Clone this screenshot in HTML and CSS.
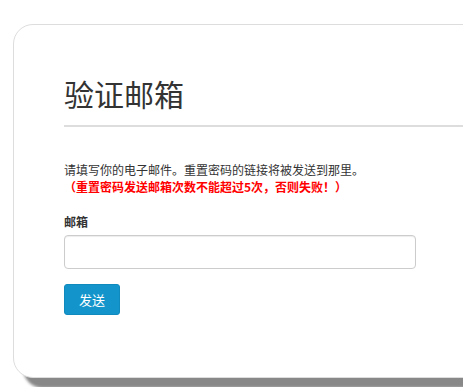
FILE: index.html
```html
<!doctype html>
<html lang="zh-CN">
<head>
    <meta charset="utf-8" />
    <meta name="viewport" content="width=device-width, initial-scale=1" />
    <title>验证邮箱</title>
    <link rel="stylesheet" href="styles.css">
</head>
<body>
    <div class="page">
        <!-- Card -->
        <div class="card">
            <h1 class="title">验证邮箱</h1>
            <hr class="rule">

            <p class="intro">
                请填写你的电子邮件。重置密码的链接将被发送到那里。<br>
                <span class="warn">（重置密码发送邮箱次数不能超过5次，否则失败！）</span>
            </p>

            <form class="form">
                <label class="label" for="email">邮箱</label>
                <input type="email" id="email" class="input">
                <button type="button" class="send-button">发送</button>
            </form>
        </div>
    </div>
</body>
</html>
```

FILE: styles.css
```css
html, body {
    height: 387px;
}
body {
    font-family: "Noto Sans CJK SC", "Liberation Sans", sans-serif;
    margin: 0;
    background: white;
    color: #333;
    overflow: hidden;
}
.page {
    padding: 24px 0 0 13px;
}
.card {
    width: 520px;
    height: 302px;
    padding: 50px 0 0 50px;
    border: 1px solid #ddd;
    border-radius: 20px;
    background: white;
    box-shadow: 10px 10px 3px #888;
}
.title {
    margin: 0;
    font-size: 30px;
    font-weight: normal;
    line-height: 36px;
}
.rule {
    margin: 14px 0 0 0;
    border: none;
    height: 2px;
    background: #ddd;
}
.intro {
    margin: 34px 0 0 0;
    font-size: 12px;
    line-height: 17px;
}
.warn {
    color: #f00;
    font-weight: bold;
}
.form {
    margin-top: 18px;
}
.label {
    display: block;
    font-size: 12px;
    font-weight: bold;
    line-height: 17px;
    margin-bottom: 5px;
}
.input {
    display: block;
    box-sizing: border-box;
    width: 352px;
    height: 34px;
    margin: 0;
    border: 1px solid #ccc;
    border-radius: 4px;
    box-shadow: inset 0 1px 1px rgba(0,0,0,0.075);
}
.send-button {
    display: block;
    margin-top: 15px;
    width: 56px;
    height: 31px;
    padding: 0;
    background: #1395cc;
    color: white;
    font-family: inherit;
    font-size: 13px;
    border: 1px solid #1089bd;
    border-radius: 3px;
}
```
